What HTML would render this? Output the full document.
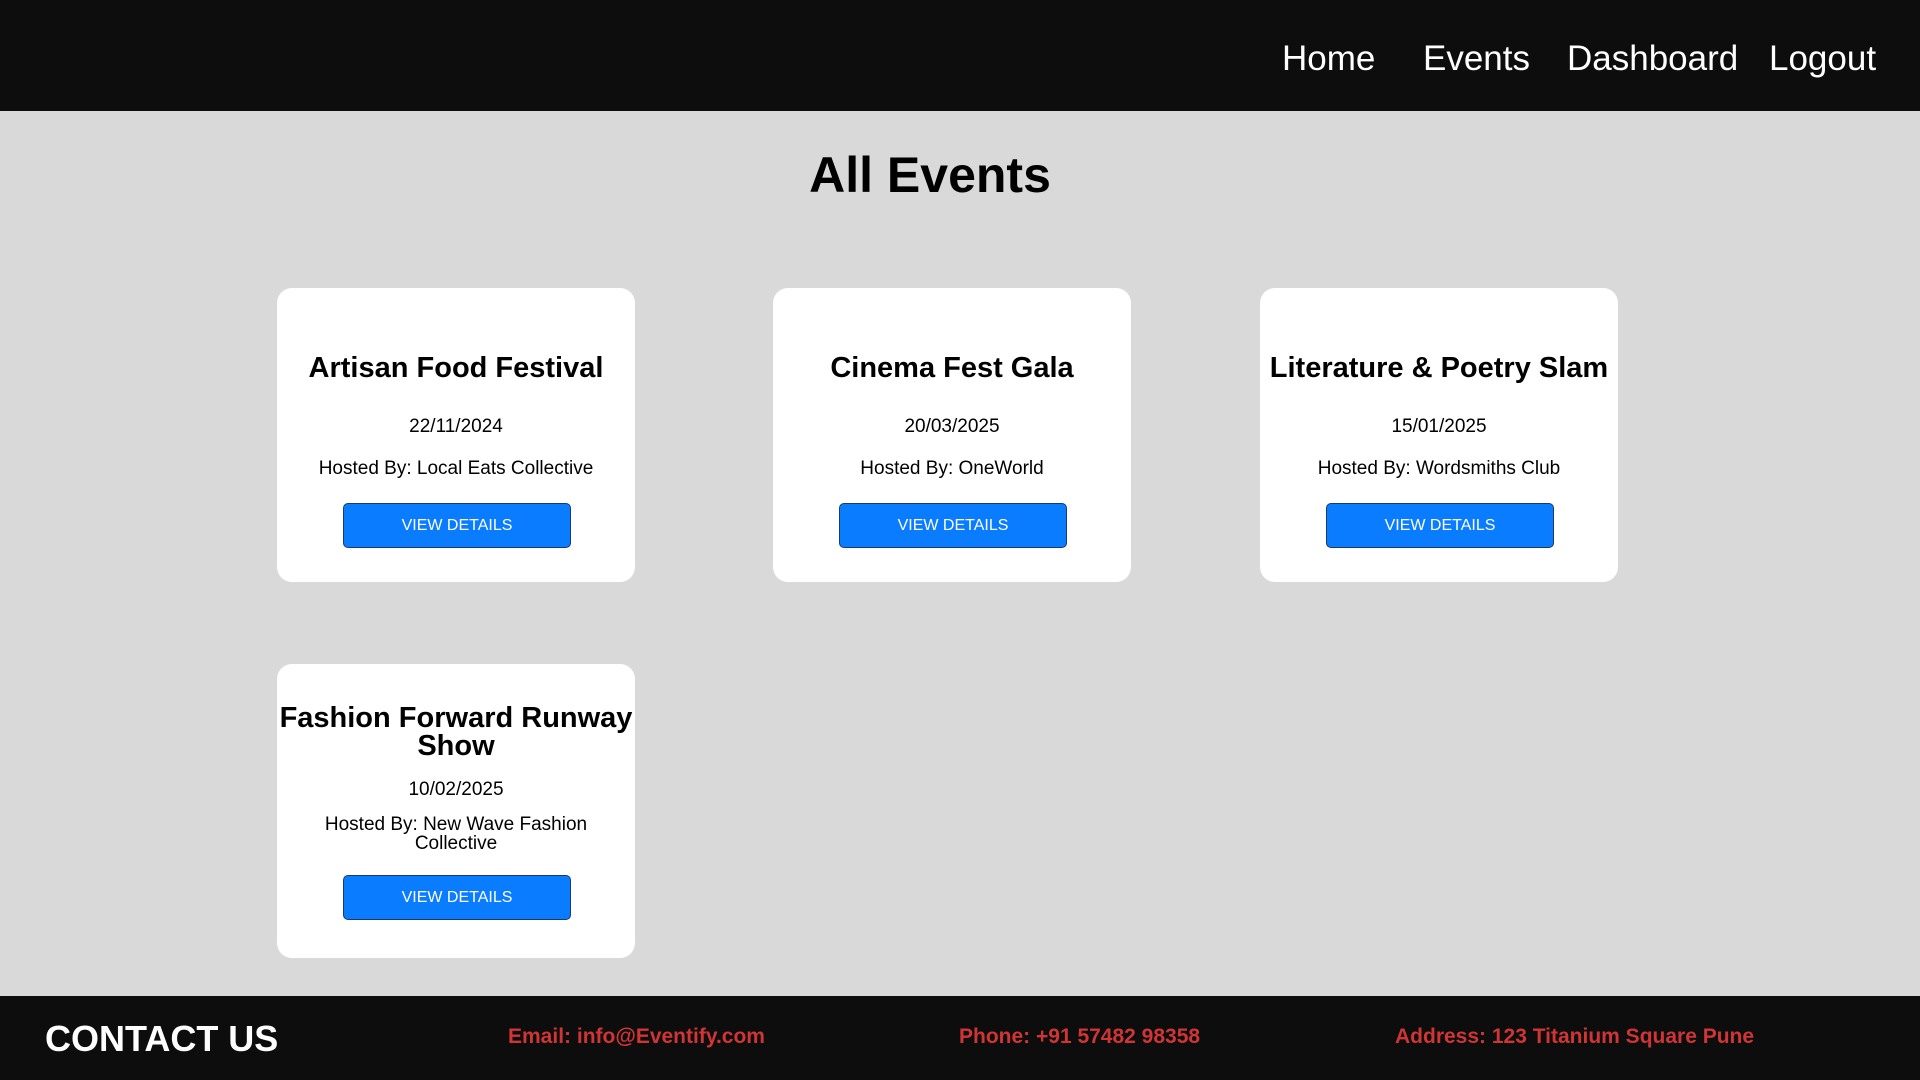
<!DOCTYPE html>
<html><head><meta charset="utf-8"><style>
*{margin:0;padding:0;box-sizing:border-box}
body{width:1920px;height:1080px;background:#d9d9d9;font-family:"Liberation Sans",sans-serif;position:relative;overflow:hidden}
.hdr{position:absolute;left:0;top:0;width:1920px;height:111px;background:#0d0d0d}
.nav{position:absolute;top:37px;color:#fff;font-size:35px;line-height:44px}
h1{position:absolute;left:0;width:1860px;text-align:center;top:146px;font-size:50px;font-weight:bold;color:#000}
.card{position:absolute;width:358px;height:294px;background:#fff;border-radius:15px;text-align:center;color:#000}
.t{position:absolute;left:0;right:0;top:63px;font-size:29px;font-weight:bold;line-height:34px}
.d{position:absolute;left:0;right:0;top:128px;font-size:19px}
.h{position:absolute;left:0;right:0;top:170px;font-size:19px}
.b{position:absolute;left:66px;top:215px;width:228px;height:45px;background:#0a7cff;border:1px solid #1a3a6a;border-radius:5px;color:#fff;font-size:16px;line-height:43px}
.ft{position:absolute;left:0;top:996px;width:1920px;height:84px;background:#0d0d0d}
.ci{position:absolute;top:1017px;font-size:21px;font-weight:bold;color:#d03535;line-height:40px}
</style></head><body>
<div class="hdr"></div>
<div class="nav" style="left:1282px">Home</div>
<div class="nav" style="left:1423px">Events</div>
<div class="nav" style="left:1567px">Dashboard</div>
<div class="nav" style="left:1769px">Logout</div>
<h1>All Events</h1>
<div class="card" style="left:277px;top:288px"><div class="t">Artisan Food Festival</div><div class="d">22/11/2024</div><div class="h">Hosted By: Local Eats Collective</div><div class="b">VIEW DETAILS</div></div>
<div class="card" style="left:773px;top:288px"><div class="t">Cinema Fest Gala</div><div class="d">20/03/2025</div><div class="h">Hosted By: OneWorld</div><div class="b">VIEW DETAILS</div></div>
<div class="card" style="left:1260px;top:288px"><div class="t">Literature &amp; Poetry Slam</div><div class="d">15/01/2025</div><div class="h">Hosted By: Wordsmiths Club</div><div class="b">VIEW DETAILS</div></div>
<div class="card" style="left:277px;top:664px"><div class="t" style="top:40px;line-height:28px">Fashion Forward Runway<br>Show</div><div class="d" style="top:115px">10/02/2025</div><div class="h" style="top:151px;line-height:19px">Hosted By: New Wave Fashion<br>Collective</div><div class="b" style="top:211px">VIEW DETAILS</div></div>
<div class="ft"></div>
<div style="position:absolute;left:45px;top:1015px;font-size:36px;font-weight:bold;color:#fff;line-height:48px">CONTACT US</div>
<div class="ci" style="left:508px">Email: info@Eventify.com</div>
<div class="ci" style="left:959px">Phone: +91 57482 98358</div>
<div class="ci" style="left:1395px">Address: 123 Titanium Square Pune</div>
</body></html>
